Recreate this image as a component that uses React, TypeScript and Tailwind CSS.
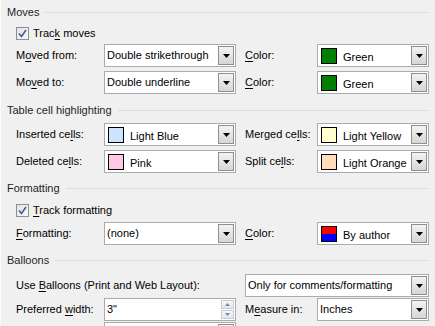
import React from "react";

const font = { fontFamily: '"Liberation Sans", Arial, sans-serif' };

function Tri() {
  return (
    <svg width="7" height="4" viewBox="0 0 7 4">
      <polygon points="0,0 7,0 3.5,4" fill="#000" />
    </svg>
  );
}

function DropButton() {
  return (
    <div className="m-[1px] flex w-[16px] items-center justify-center border border-[#8e8f8f] bg-gradient-to-b from-[#f3f3f3] to-[#d6d6d6]">
      <Tri />
    </div>
  );
}

function Combo({ w, children }: { w: string; children?: React.ReactNode }) {
  return (
    <div className={`flex h-[23px] border border-[#a8abb0] bg-white ${w}`}>
      <div className="flex flex-1 items-center overflow-hidden whitespace-nowrap pl-[2px]">{children}</div>
      <DropButton />
    </div>
  );
}

function Swatch({ color, text }: { color: string; text: string }) {
  return (
    <div className="flex h-full items-center">
      <div className="ml-[1px] h-[16px] w-[16px] border border-black" style={{ background: color }} />
      <span className="ml-[6px] mt-[4px]">{text}</span>
    </div>
  );
}

function Check({ label }: { label: React.ReactNode }) {
  return (
    <div className="flex items-center">
      <div className="ml-[9px] flex h-[13px] w-[13px] items-center justify-center border border-[#8e8f8f] bg-gradient-to-br from-[#dfe4ec] to-[#f6f7f9]">
        <svg width="9" height="9" viewBox="0 0 9 9">
          <path d="M1 4.5 L3.5 7.5 L8 1" stroke="#4b5c8c" strokeWidth="1.6" fill="none" />
        </svg>
      </div>
      <span className="ml-[4px]">{label}</span>
    </div>
  );
}

function Header({ text, mt }: { text: string; mt: string }) {
  return (
    <div className={`flex h-[24px] items-center ${mt}`}>
      <span className="text-[#1e1e1e]">{text}</span>
      <div className="ml-[6px] h-px flex-1 bg-[#d7dde3]" />
    </div>
  );
}

function U({ children }: { children: React.ReactNode }) {
  return <span className="underline underline-offset-2">{children}</span>;
}

function Row({
  label,
  mt,
  left,
  rlabel,
  right,
}: {
  label?: React.ReactNode;
  mt: string;
  left: React.ReactNode;
  rlabel?: React.ReactNode;
  right?: React.ReactNode;
}) {
  return (
    <div className={`flex h-[23px] items-center ${mt}`}>
      <div className="w-[97px] pl-[9px]">{label}</div>
      {left}
      {rlabel && <div className="ml-[9px] w-[72px]">{rlabel}</div>}
      {right}
    </div>
  );
}

export default function App() {
  return (
    <div
      className="h-[326px] w-[435px] overflow-hidden border-l border-[#fafafa] bg-[#f0f0f0] pl-[6px] pr-[6px] text-[11px] text-black"
      style={font}
    >
      <Header text="Moves" mt="mt-0" />
      <div className="flex h-[18px] items-center">
        <Check label={<>Trac<U>k</U> moves</>} />
      </div>
      <Row
        mt="mt-[2px]"
        label={<>M<U>o</U>ved from:</>}
        left={<Combo w="w-[132px]">Double strikethrough</Combo>}
        rlabel={<><U>C</U>olor:</>}
        right={<Combo w="w-[112px]"><Swatch color="#008000" text="Green" /></Combo>}
      />
      <Row
        mt="mt-[4px]"
        label={<>Mo<U>v</U>ed to:</>}
        left={<Combo w="w-[132px]">Double underline</Combo>}
        rlabel={<><U>C</U>olor:</>}
        right={<Combo w="w-[112px]"><Swatch color="#008000" text="Green" /></Combo>}
      />

      <Header text="Table cell highlighting" mt="mt-[4px]" />
      <Row
        mt="mt-[1px]"
        label={<>Inserted ce<U>l</U>ls:</>}
        left={<Combo w="w-[132px]"><Swatch color="#cce4ff" text="Light Blue" /></Combo>}
        rlabel={<>Merged ce<U>l</U>ls:</>}
        right={<Combo w="w-[112px]"><Swatch color="#ffffcc" text="Light Yellow" /></Combo>}
      />
      <Row
        mt="mt-[4px]"
        label={<>Deleted ce<U>l</U>ls:</>}
        left={<Combo w="w-[132px]"><Swatch color="#ffc8e4" text="Pink" /></Combo>}
        rlabel={<>Split ce<U>l</U>ls:</>}
        right={<Combo w="w-[112px]"><Swatch color="#ffdcbc" text="Light Orange" /></Combo>}
      />

      <Header text="Formatting" mt="mt-[3px]" />
      <div className="flex h-[20px] items-center">
        <Check label={<><U>T</U>rack formatting</>} />
      </div>
      <Row
        mt="mt-[2px]"
        label={<><U>F</U>ormatting:</>}
        left={<Combo w="w-[132px]">(none)</Combo>}
        rlabel={<><U>C</U>olor:</>}
        right={
          <Combo w="w-[112px]">
            <div className="flex h-full items-center">
              <div className="ml-[1px] flex h-[16px] w-[16px] flex-col border border-black">
                <div className="flex-1 bg-[#ff0000]" />
                <div className="flex-1 bg-[#0000ff]" />
              </div>
              <span className="ml-[6px] mt-[4px]">By author</span>
            </div>
          </Combo>
        }
      />

      <Header text="Balloons" mt="mt-[3px]" />
      <div className="mt-[2px] flex h-[23px] items-center">
        <div className="w-[238px] pl-[9px]">
          Use <U>B</U>alloons (Print and Web Layout):
        </div>
        <Combo w="w-[184px]">Only for comments/formatting</Combo>
      </div>
      <Row
        mt="mt-[1px]"
        label={<>Preferred <U>w</U>idth:</>}
        left={
          <div className="flex h-[23px] w-[132px] border border-[#a8abb0] bg-white">
            <div className="flex flex-1 items-center pl-[2px]">3"</div>
            <div className="m-[1px] flex w-[13px] flex-col gap-px">
              <div className="flex flex-1 items-center justify-center border border-[#c7ccd4] bg-gradient-to-b from-[#f6f7f9] to-[#e3e6eb]">
                <svg width="5" height="3" viewBox="0 0 5 3"><polygon points="0,3 5,3 2.5,0" fill="#6f8bb0" /></svg>
              </div>
              <div className="flex flex-1 items-center justify-center border border-[#c7ccd4] bg-gradient-to-b from-[#f6f7f9] to-[#e3e6eb]">
                <svg width="5" height="3" viewBox="0 0 5 3"><polygon points="0,0 5,0 2.5,3" fill="#6f8bb0" /></svg>
              </div>
            </div>
          </div>
        }
        rlabel={<>M<U>e</U>asure in:</>}
        right={<Combo w="w-[112px]">Inches</Combo>}
      />
      <Row mt="mt-[1px]" left={<Combo w="w-[132px]" />} />
    </div>
  );
}
